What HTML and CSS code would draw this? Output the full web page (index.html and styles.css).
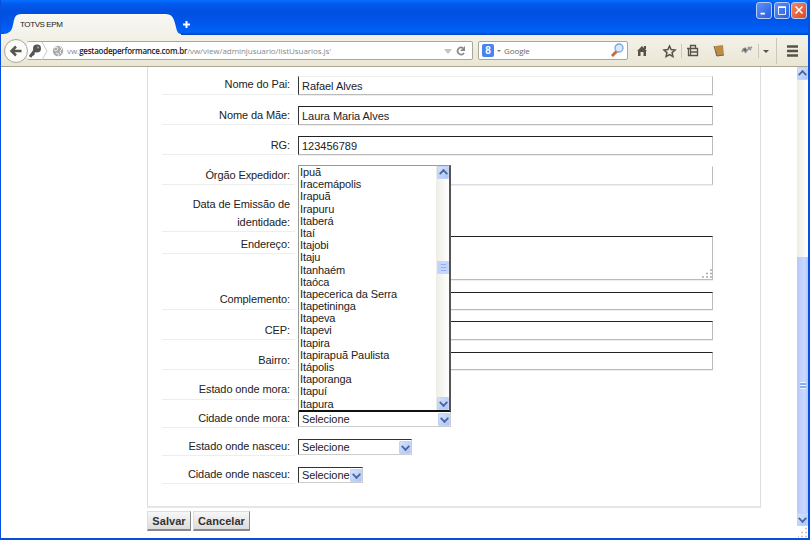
FILE: index.html
```html
<!DOCTYPE html>
<html lang="pt-BR">
<head>
<meta charset="utf-8">
<title>TOTVS EPM</title>
<link rel="stylesheet" href="styles.css">
</head>
<body>
<div class="window">
  <header class="titlebar">
    <svg class="tab-shape" width="180" height="22" viewBox="0 0 180 22"><defs><linearGradient id="tab" x2="0" y2="1"><stop stop-color="#f8f8f4"/><stop offset="1" stop-color="#f2f1e9"/></linearGradient></defs><path d="M0 22V21C12 21 11 15 13 7Q14 1 20 1H165Q171 1 173 7C176 16 175 20 180 21V22Z" fill="url(#tab)"/></svg>
    <span class="tab-title">TOTVS EPM</span>
    <svg class="plus" width="9" height="9" viewBox="0 0 9 9"><path d="M4.500 1v7M1 4.500h7" stroke="#fff" stroke-width="2"/></svg>
    <div class="controls">
      <svg class="win" width="16" height="17" viewBox="0 0 16 17"><path d="M4 12h5" stroke="#fff" stroke-width="2"/></svg>
      <svg class="win" width="16" height="17" viewBox="0 0 16 17"><path d="M4 5h8v8H4z" stroke="#fff" fill="none"/><path d="M3.500 4.500h9" stroke="#fff" stroke-width="2"/></svg>
      <svg class="win close" width="16" height="17" viewBox="0 0 16 17"><path d="m4 4 8 8M12 4l-8 8" stroke="#fff" stroke-width="1.800"/></svg>
    </div>
  </header>
  <nav class="toolbar">
    <svg class="back" width="26" height="26" viewBox="0 0 26 26"><circle cx="13" cy="13" r="11.500" fill="#fbfbf8" stroke="#a9a69b"/><path d="M18.500 13H9M13 8.500l-4.500 4.500 4.500 4.500" fill="none" stroke="#57564f" stroke-width="2.500"/></svg>
    <div class="address">
      <svg class="key" width="21" height="18" viewBox="0 0 21 18"><circle cx="8" cy="6.500" r="4" fill="#555"/><path d="m6 8-5 7M3 11l2 2" stroke="#555" stroke-width="3"/><circle cx="9" cy="5.500" r="1" fill="#aaa"/><path d="m13 0 5 9-5 9" fill="none" stroke="#c9c9c9"/></svg>
      <svg class="globe" width="12" height="12" viewBox="0 0 12 12"><circle cx="6" cy="6" r="5.200" fill="#aaa"/><path d="M2 3l3-1 1 2-2 2-2-1M8 2l2 2-2 2 1 3M4 8l3 1-1 2" stroke="#eee" fill="none"/></svg>
      <span class="url">vw.<b>gestaodeperformance.com.br</b>/vw/view/adminjusuario/listUsuarios.js'</span>
      <svg class="reload" width="25" height="12" viewBox="0 0 25 12"><path d="M1 4h8L5 9z" fill="#c3c3c3"/><path d="M20 3A3.500 3.500 0 1 0 21 8" fill="none" stroke="#888" stroke-width="1.700"/><path d="M22 1v5h-5z" fill="#888"/></svg>
    </div>
    <div class="search">
      <span class="g">8</span><span class="tri"></span><span class="engine">Google</span>
      <svg class="lens" width="15" height="15" viewBox="0 0 15 15"><path d="m7 8-5 5" stroke="#c66c3d" stroke-width="3"/><circle cx="9" cy="5" r="4" fill="#d5eafa" stroke="#7ba6d8" stroke-width="1.300"/></svg>
    </div>
    <svg class="icons" width="168" height="28" viewBox="0 0 168 28"><g stroke="#55534a" fill="none"><path d="m3 14 5-5 5 5h-1v5H9.500v-4h-3v4H4v-5z" fill="#55534a" stroke="none"/><path d="M11 9v3" stroke-width="2"/><path d="m35.500 9 1.600 3.600 3.900.4-2.900 2.600.8 3.900-3.400-2-3.400 2 .8-3.900-2.900-2.600 3.900-.4z" stroke-width="1.500"/><path d="M54.500 11.500h9v7h-9zM56.500 11V8.500h5V11M53 11.500h11M56.500 12v6M56.500 15h7" stroke-width="1.300"/><path d="m129 13 3 3 3-3z" fill="#55534a" stroke="none"/><path d="M153 9.500h11M153 14h11M153 18.500h11" stroke-width="2.500"/></g><path d="M47.500 7v14M124.500 7v14M142.500 1v26" stroke="#cac8bd"/><path d="M81 9l8-1 1 10-8 1z" fill="#bd8b45"/><path d="m80 9 3 10 7-1" fill="none" stroke="#795d3c"/><path d="M108 15l1.500-3M111 16l3-4M109 12l3-1M113 13l5-3M114 10l3 3" fill="none" stroke="#999" stroke-width="1.800"/><circle cx="111" cy="13" r="1.700" fill="#666"/></svg>
  </nav>
  <div class="viewport">
    <main class="page">
      <form class="panel">
        <div class="row r1"><label>Nome do Pai:</label><div class="field light-top">Rafael Alves</div></div>
        <div class="row r2"><label>Nome da Mãe:</label><div class="field">Laura Maria Alves</div></div>
        <div class="row r3"><label>RG:</label><div class="field rg">123456789</div></div>
        <div class="row r4"><label>Órgão Expedidor:</label><div class="field pale"></div></div>
        <div class="row r5"><label>Data de Emissão de identidade:</label></div>
        <div class="row r6"><label>Endereço:</label><div class="field area"><svg width="10" height="9" viewBox="0 0 10 9"><path d="M8 1h2M4 4.500h2M8 4.500h2M0 8h2M4 8h2M8 8h2" stroke="#aaa" stroke-width="1.500"/></svg></div></div>
        <div class="row r7"><label>Complemento:</label><div class="field low"></div></div>
        <div class="row r8"><label>CEP:</label><div class="field"></div></div>
        <div class="row r9"><label>Bairro:</label><div class="field low"></div></div>
        <div class="row r10"><label>Estado onde mora:</label></div>
        <div class="row r11"><label>Cidade onde mora:</label>
          <div class="select wide"><span>Selecione</span><i class="arrow"></i>
            <div class="dropdown">
              <ul><li>Ipuã</li><li>Iracemápolis</li><li>Irapuã</li><li>Irapuru</li><li>Itaberá</li><li>Itaí</li><li>Itajobi</li><li>Itaju</li><li>Itanhaém</li><li>Itaóca</li><li>Itapecerica da Serra</li><li>Itapetininga</li><li>Itapeva</li><li>Itapevi</li><li>Itapira</li><li>Itapirapuã Paulista</li><li>Itápolis</li><li>Itaporanga</li><li>Itapuí</li><li>Itapura</li></ul>
              <div class="list-scroll"><i class="arrow up"></i><i class="thumb"></i><i class="arrow"></i></div>
            </div>
          </div>
        </div>
        <div class="row r12"><label>Estado onde nasceu:</label><div class="select medium"><span>Selecione</span><i class="arrow"></i></div></div>
        <div class="row r13"><label>Cidade onde nasceu:</label><div class="select narrow"><span>Selecione</span><i class="arrow"></i></div></div>
      </form>
      <div class="actions"><button class="save">Salvar</button><button class="cancel">Cancelar</button></div>
    </main>
    <aside class="scrollbar"><i class="arrow up"></i><div class="bar"><i class="grip"></i></div><i class="arrow"></i>
      <svg class="corner" width="10" height="10" viewBox="0 0 10 10"><path d="M7 1h2M3 5h2M7 5h2M0 9h1M3 9h2M7 9h2" stroke="#c8c5b8" stroke-width="1.500"/></svg>
    </aside>
  </div>
</div>
</body>
</html>
```
FILE: styles.css
```css
* { box-sizing: border-box; }
body { margin: 0; font: 11px/12px "Liberation Sans", Arial, sans-serif; color: #222; overflow: hidden; }
svg { display: block; flex: none; }
.window { width: 810px; height: 540px; border: solid #0750df; border-width: 0 2px 2px 1px; display: flex; flex-direction: column; background: #fff; }

.titlebar { height: 35px; flex: none; background: linear-gradient(#0670ff 0, #0259ed 4px, #0050df 12px, #0057ed 24px, #0064fa 32px, #0145bd 35px); display: grid; grid-template-columns: 181px 12px 1fr 52px; align-items: end; }
.tab-shape { grid-area: 1 / 1; }
.tab-title { grid-area: 1 / 1; padding: 0 0 5px 19px; font-size: 8px; line-height: 11px; letter-spacing: -.4px; z-index: 1; }
.plus { margin-bottom: 6px; }
.controls { grid-column: 4; align-self: start; display: flex; gap: 1.500px; padding-top: 2px; }
.win { border: 1px solid #b8ccf5; border-radius: 3px; background: linear-gradient(135deg, #6290f3, #245ee2); }
.close { background: linear-gradient(135deg, #ee8b69, #d94820); }

.toolbar { height: 32px; flex: none; display: flex; align-items: center; background: linear-gradient(#f4f2e9, #eae6d5); border-bottom: 1px solid #aaa68f; padding-left: 2px; }
.back { z-index: 1; margin-right: -2px; }
.address { height: 19px; width: 446px; display: flex; align-items: center; background: #fff; border: 1px solid #aaa798; border-left: 0; border-radius: 2px; color: #888; }
.key { margin-left: 2px; }
.globe { margin: 0 3px 0 2px; }
.url { font: 8px/14px "Open Sans", "Noto Sans", sans-serif; letter-spacing: -.05px; white-space: nowrap; width: 266px; flex: none; }
.url b { color: #222; font-weight: 600; letter-spacing: -.26px; }
.reload { margin-left: auto; margin-right: 4px; }
.search { height: 19px; width: 150px; margin-left: 5px; display: flex; align-items: center; background: #fff; border: 1px solid #aaa798; border-radius: 2px; padding: 0 2px 0 3px; }
.g { width: 12px; height: 13px; border-radius: 2px; background: #4a83ec; color: #fff; font: bold 10px/13px "Liberation Sans", sans-serif; text-align: center; }
.tri { border: solid transparent; border-width: 2px 2px 0; border-top-color: #777; margin: 0 3px; }
.engine { font: 8px/12px "Open Sans", sans-serif; letter-spacing: -.1px; color: #666; }
.lens { margin-left: auto; }
.icons { margin-left: 6px; }

.viewport { display: flex; flex: 1; min-height: 0; }
.page { flex: 1; padding-left: 146px; }
.panel { width: 614px; height: 441px; border: 1px solid #ddd; border-top: 0; border-bottom: 2px solid #e6e6e6; padding-left: 14px; }
.row { display: grid; grid-template-columns: 133px 415px; column-gap: 3px; align-items: end; }
.row label { border-bottom: 1px solid #eee; padding: 0 5px 4px 0; text-align: right; line-height: 12px; letter-spacing: -.1px; color: #222; }
.r1 { height: 28px; }
.r2 { height: 30px; }
.r3 { height: 30px; }
.r4 { height: 30px; }
.r5 { height: 47px; }
.r6 { height: 49px; align-items: start; }
.r7 { height: 29px; }
.r8 { height: 30px; }
.r9 { height: 30px; }
.r10 { height: 30px; }
.r11, .r12, .r13 { height: 28px; }
.r5 label { line-height: 18px; padding-bottom: 0; }
.r2 label, .r3 label, .r4 label, .r8 label, .r9 label, .r11 label, .r12 label, .r13 label { padding-bottom: 3px; }
.r6 label { height: 22px; padding-top: 6px; }
.field { height: 19px; border: 1px solid #bbb; border-top-color: #222; border-left-color: #333; line-height: 18px; padding-left: 3px; letter-spacing: -.05px; box-shadow: 0 1px #eee; }
.low { height: 18px; }
.light-top { border-top-color: #eee; }
.rg { letter-spacing: 0; }
.pale { border-top-color: #fff; border-bottom-color: #ddd; }
.area { height: 44px; margin-top: 4px; display: flex; align-items: end; justify-content: end; padding-bottom: 1px; }
.select { position: relative; height: 16px; margin-bottom: 1px; border: 1px solid #ccc; border-top-color: #333; border-left-color: #333; display: flex; align-items: center; justify-content: space-between; padding-left: 3px; letter-spacing: -.1px; }
.wide { width: 153px; }
.medium { width: 114px; }
.narrow { width: 65px; }
.arrow { flex: none; width: 12px; height: 13px; background: linear-gradient(135deg, #d7e3ff, #abc4fa); border: 1px solid #c3d2f6; display: grid; place-items: center; border-radius: 1px; }
.arrow::before { content: ""; width: 5px; height: 5px; border: solid #4c6596; border-width: 0 2px 2px 0; transform: translateY(-1px) rotate(45deg) scale(.9); }
.arrow.up::before { transform: translateY(1px) rotate(225deg) scale(.9); }
.dropdown { position: absolute; left: -1px; bottom: 14px; width: 153px; height: 247px; background: #fff; border: 1px solid #999; border-right: 2px solid #555; border-bottom: 2px solid #111; display: flex; z-index: 2; }
.dropdown ul { flex: 1; list-style: none; margin: 0; padding: 0 0 0 1px; }
.dropdown li { height: 12.200px; line-height: 12.200px; white-space: nowrap; letter-spacing: -.1px; }
.list-scroll { width: 13px; background: linear-gradient(90deg, #eeede5, #fff); display: flex; flex-direction: column; justify-content: space-between; align-items: end; }
.thumb { width: 12px; height: 13px; margin-top: -38px; transform: translateY(-2px); border: 1px solid #c9d8fa; background: linear-gradient(90deg, #c0d2fd 3px, transparent 3px 8px, #c0d2fd 8px), repeating-linear-gradient(#c7d7ff 0 2px, #91adf0 2px 3px); }
.actions { display: flex; gap: 2px; margin-top: 3px; }
.actions button { height: 20px; padding: 0; border: 1px solid #ddd; border-right-color: #888; border-bottom: 2px solid #888; background: linear-gradient(#f7f7f7, #dcdcdc); font: bold 11px/14px "Liberation Sans", sans-serif; color: #333; letter-spacing: .05px; }
.save { width: 44px; }
.cancel { width: 57px; }
.scrollbar { position: relative; width: 11px; flex: none; background: linear-gradient(90deg, #eeede2, #fff); display: flex; flex-direction: column; padding-bottom: 12px; }
.scrollbar .arrow { width: 11px; }
.bar { flex: 1; margin-top: 177px; background: linear-gradient(90deg, #b8cafa, #cad8ff 70%, #b3c7f7); display: grid; place-items: center; }
.grip { width: 6px; height: 7px; background: repeating-linear-gradient(#edf4ff 0 1px, #8daef0 1px 3px); }
.corner { position: absolute; right: 0; bottom: 0; width: 11px; height: 12px; padding: 1px 0 0 1px; background: #fff; }
```
